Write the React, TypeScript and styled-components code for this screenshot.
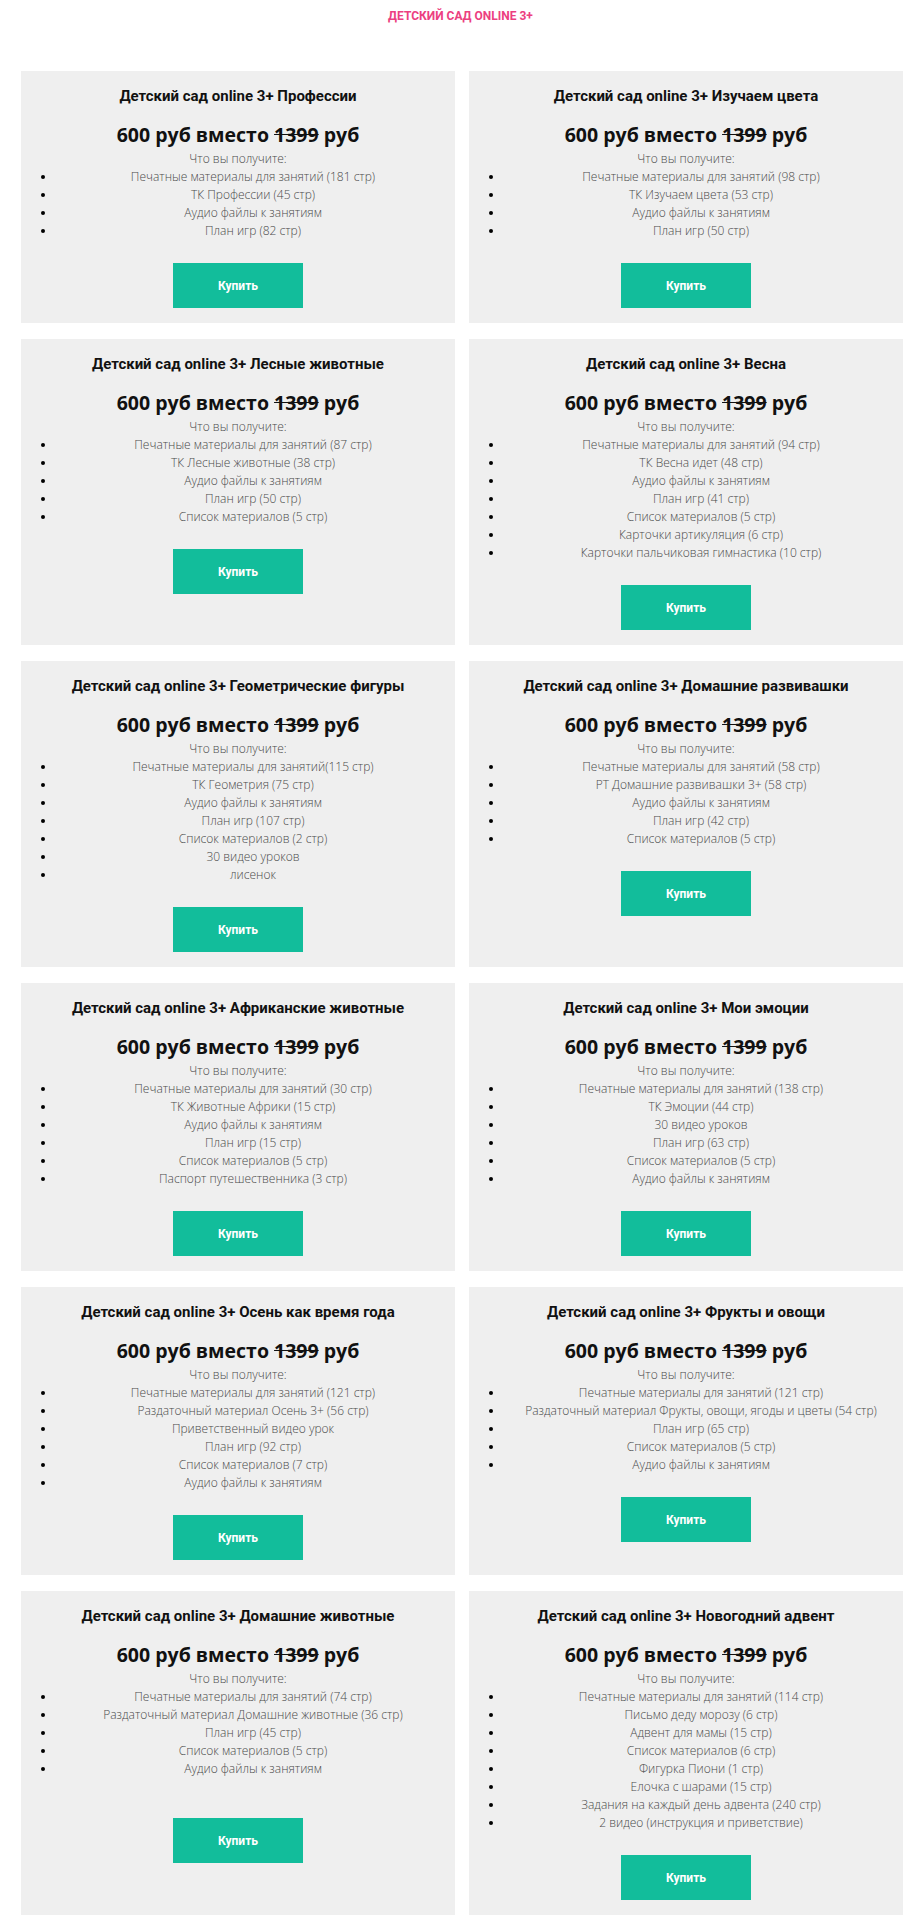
import React from "react";
import styled, { createGlobalStyle } from "styled-components";

const GlobalStyle = createGlobalStyle`
  body {
    margin: 0;
    background: #ffffff;
    font-family: "Open Sans", "Liberation Sans", sans-serif;
  }
`;

const Page = styled.div`
  padding-top: 8px;
  padding-bottom: 8px;
`;

const Heading = styled.h1`
  margin: 0;
  text-align: center;
  font-family: Roboto, "Liberation Sans", sans-serif;
  font-weight: 700;
  font-size: 12px;
  line-height: 16px;
  color: #ec4080;
  text-transform: uppercase;
`;

const Grid = styled.div`
  margin-top: 47px;
  padding: 0 18px 0 21px;
  display: grid;
  grid-template-columns: 1fr 1fr;
  column-gap: 14px;
  row-gap: 16px;
`;

const Card = styled.div`
  background: #efefef;
  padding: 15px 0;
  text-align: center;
`;

const Title = styled.h3`
  margin: 0;
  font-family: Roboto, "Liberation Sans", sans-serif;
  font-weight: 700;
  font-size: 15px;
  line-height: 20px;
  color: #111;
`;

const Price = styled.div`
  margin: 15px 0 1px;
  font-family: "Open Sans", "Liberation Sans", sans-serif;
  font-weight: 700;
  font-size: 19.5px;
  line-height: 28px;
  color: #111;
`;

const Caption = styled.div`
  font-family: "Open Sans", "Liberation Sans", sans-serif;
  font-weight: 300;
  font-size: 12px;
  line-height: 18px;
  color: #4a4a4a;
`;

const List = styled.ul<{ $extraGap?: boolean }>`
  margin: 0;
  padding: 0 5px ${(p) => (p.$extraGap ? "17px" : "0")} 35px;
  list-style: disc outside;
`;

const Item = styled.li`
  font-family: "Open Sans", "Liberation Sans", sans-serif;
  font-weight: 300;
  font-size: 12px;
  line-height: 18px;
  color: #4a4a4a;

  &::marker {
    color: #000;
  }
`;

const BuyButton = styled.button`
  display: block;
  margin: 23px auto 0;
  width: 130px;
  height: 45px;
  border: none;
  background: #12bd9b;
  color: #fff;
  font-family: Roboto, "Liberation Sans", sans-serif;
  font-weight: 700;
  font-size: 12px;
  cursor: pointer;
`;

type Product = {
  name: string;
  items: string[];
  extraGap?: boolean;
};

const products: Product[] = [
  {
    name: "Профессии",
    items: [
      "Печатные материалы для занятий (181 стр)",
      "ТК Профессии (45 стр)",
      "Аудио файлы к занятиям",
      "План игр (82 стр)",
    ],
  },
  {
    name: "Изучаем цвета",
    items: [
      "Печатные материалы для занятий (98 стр)",
      "ТК Изучаем цвета (53 стр)",
      "Аудио файлы к занятиям",
      "План игр (50 стр)",
    ],
  },
  {
    name: "Лесные животные",
    items: [
      "Печатные материалы для занятий (87 стр)",
      "ТК Лесные животные (38 стр)",
      "Аудио файлы к занятиям",
      "План игр (50 стр)",
      "Список материалов (5 стр)",
    ],
  },
  {
    name: "Весна",
    items: [
      "Печатные материалы для занятий (94 стр)",
      "ТК Весна идет (48 стр)",
      "Аудио файлы к занятиям",
      "План игр (41 стр)",
      "Список материалов (5 стр)",
      "Карточки артикуляция (6 стр)",
      "Карточки пальчиковая гимнастика (10 стр)",
    ],
  },
  {
    name: "Геометрические фигуры",
    items: [
      "Печатные материалы для занятий(115 стр)",
      "ТК Геометрия (75 стр)",
      "Аудио файлы к занятиям",
      "План игр (107 стр)",
      "Список материалов (2 стр)",
      "30 видео уроков",
      "лисенок",
    ],
  },
  {
    name: "Домашние развивашки",
    items: [
      "Печатные материалы для занятий (58 стр)",
      "РТ Домашние развивашки 3+ (58 стр)",
      "Аудио файлы к занятиям",
      "План игр (42 стр)",
      "Список материалов (5 стр)",
    ],
  },
  {
    name: "Африканские животные",
    items: [
      "Печатные материалы для занятий (30 стр)",
      "ТК Животные Африки (15 стр)",
      "Аудио файлы к занятиям",
      "План игр (15 стр)",
      "Список материалов (5 стр)",
      "Паспорт путешественника (3 стр)",
    ],
  },
  {
    name: "Мои эмоции",
    items: [
      "Печатные материалы для занятий (138 стр)",
      "ТК Эмоции (44 стр)",
      "30 видео уроков",
      "План игр (63 стр)",
      "Список материалов (5 стр)",
      "Аудио файлы к занятиям",
    ],
  },
  {
    name: "Осень как время года",
    items: [
      "Печатные материалы для занятий (121 стр)",
      "Раздаточный материал Осень 3+ (56 стр)",
      "Приветственный видео урок",
      "План игр (92 стр)",
      "Список материалов (7 стр)",
      "Аудио файлы к занятиям",
    ],
  },
  {
    name: "Фрукты и овощи",
    items: [
      "Печатные материалы для занятий (121 стр)",
      "Раздаточный материал Фрукты, овощи, ягоды и цветы (54 стр)",
      "План игр (65 стр)",
      "Список материалов (5 стр)",
      "Аудио файлы к занятиям",
    ],
  },
  {
    name: "Домашние животные",
    extraGap: true,
    items: [
      "Печатные материалы для занятий (74 стр)",
      "Раздаточный материал Домашние животные (36 стр)",
      "План игр (45 стр)",
      "Список материалов (5 стр)",
      "Аудио файлы к занятиям",
    ],
  },
  {
    name: "Новогодний адвент",
    items: [
      "Печатные материалы для занятий (114 стр)",
      "Письмо деду морозу (6 стр)",
      "Адвент для мамы (15 стр)",
      "Список материалов (6 стр)",
      "Фигурка Пиони (1 стр)",
      "Елочка с шарами (15 стр)",
      "Задания на каждый день адвента (240 стр)",
      "2 видео (инструкция и приветствие)",
    ],
  },
];

const ProductCard = ({ product }: { product: Product }) => (
  <Card>
    <Title>Детский сад online 3+ {product.name}</Title>
    <Price>
      600 руб вместо <s>1399</s> руб
    </Price>
    <Caption>Что вы получите:</Caption>
    <List $extraGap={product.extraGap}>
      {product.items.map((item, index) => (
        <Item key={`item-${index}`}>{item}</Item>
      ))}
    </List>
    <BuyButton>Купить</BuyButton>
  </Card>
);

const App = () => {
  return (
    <Page>
      <GlobalStyle />
      <Heading>Детский сад online 3+</Heading>
      <Grid>
        {products.map((product) => (
          <ProductCard key={product.name} product={product} />
        ))}
      </Grid>
    </Page>
  );
};

export default App;
